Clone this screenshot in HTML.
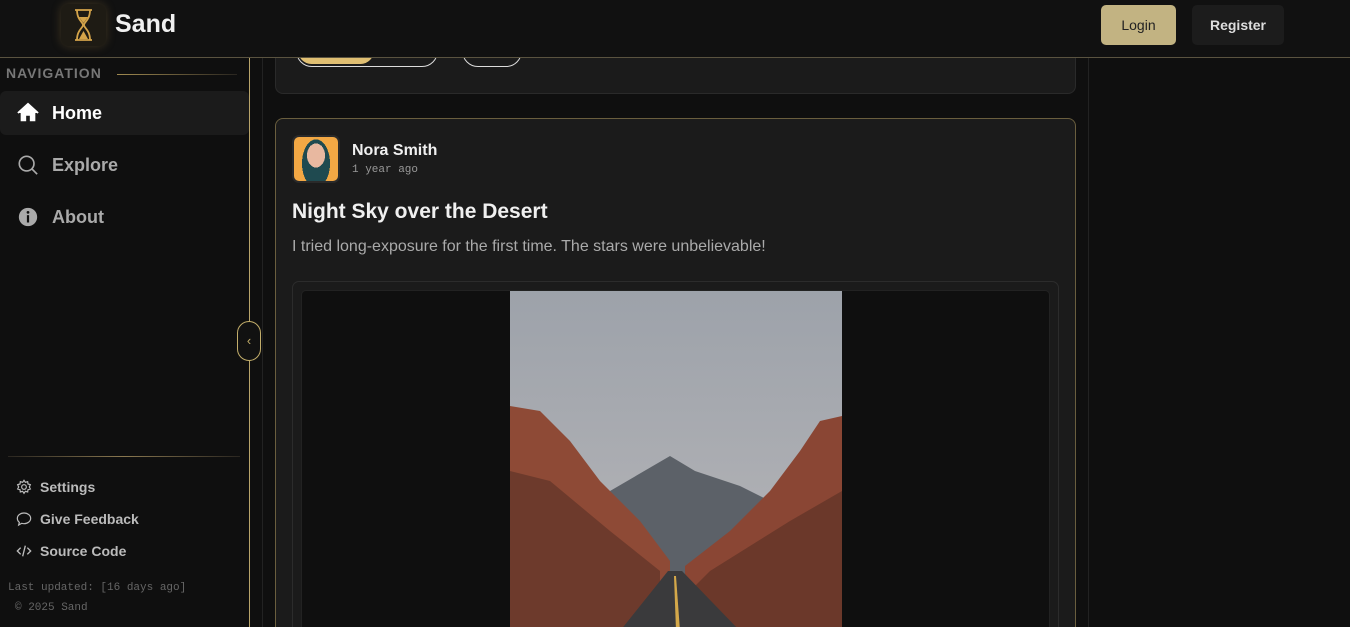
<!DOCTYPE html>
<html><head><style>
*{box-sizing:border-box;margin:0;padding:0}
html{width:1350px;height:627px;overflow:hidden}
body{width:1350px;height:627px;overflow:hidden;background:#0f0f0f;font-family:"Liberation Sans",sans-serif;color:#eee;position:relative}
.hdr{position:absolute;left:0;top:0;width:1350px;height:58px;background:#111;border-bottom:1px solid #5a5340;z-index:5}
.logo{position:absolute;left:61px;top:4px;width:45px;height:42px;border-radius:8px;background:#1e1b14;box-shadow:0 0 10px rgba(200,160,80,.25)}
.brand{position:absolute;left:115px;top:10px;font-size:25px;font-weight:bold;color:#f0f0f0}
.btn{position:absolute;top:5px;height:40px;border-radius:5px;font-size:14px;font-weight:bold;display:flex;align-items:center;justify-content:center}
.side{position:absolute;left:0;top:58px;width:250px;height:569px;border-right:1px solid #b8a46a}
.navt{position:absolute;left:6px;top:7px;font-size:14px;font-weight:bold;letter-spacing:1px;color:#777}
.navline{position:absolute;left:117px;top:16px;width:120px;height:1px;background:linear-gradient(90deg,#a08a50,#2a2620)}
.item{position:absolute;left:0;width:249px;height:44px;display:flex;align-items:center;padding-left:17px;font-size:18px;font-weight:bold;color:#aaa;border-radius:6px}
.item svg{margin-right:13px}
.sm{position:absolute;left:16px;display:flex;align-items:center;font-size:14px;font-weight:bold;color:#bbb}
.sm svg{margin-right:8px}
.mono{position:absolute;font-family:"Liberation Mono",monospace;font-size:11px;color:#666}
.card{position:absolute;left:275px;width:801px;background:#1b1b1b;border-radius:8px;overflow:hidden}
.pill{position:absolute;height:32px;border:1.5px solid #ddd;border-radius:16px}
</style></head><body>
<div class="hdr">
  <div class="logo"><svg width="45" height="42" viewBox="0 0 45 42"><g stroke="#d4a44a" stroke-width="1.8" fill="none"><line x1="14" y1="6" x2="31" y2="6"/><line x1="14" y1="36" x2="31" y2="36"/><path d="M16 6 C16 16 22 18 22 21 C22 24 16 26 16 36 M29 6 C29 16 23 18 23 21 C23 24 29 26 29 36"/></g><path d="M18 13 L27 13 L22.5 19Z M22.5 27 L27 35 L18 35Z" fill="#d4a44a"/></svg></div>
  <div class="brand">Sand</div>
  <div class="btn" style="left:1101px;width:75px;background:#c2b382;color:#222;font-weight:normal">Login</div>
  <div class="btn" style="left:1192px;width:92px;background:#1c1c1c;color:#ddd">Register</div>
</div>
<div style="position:absolute;left:262px;top:58px;width:1px;height:569px;background:#222"></div>
<div style="position:absolute;left:1088px;top:58px;width:1px;height:569px;background:#222"></div>
<div class="side">
  <div class="navt">NAVIGATION</div><div class="navline"></div>
  <div class="item" style="top:33px;background:#1b1b1b;color:#fff"><svg width="22" height="22" viewBox="0 0 24 24"><path d="M12 3 L2 12 L4 12 L4 21 L10 21 L10 15 L14 15 L14 21 L20 21 L20 12 L22 12Z" fill="#fff"/><path d="M1 12 L12 2 L23 12" stroke="#fff" stroke-width="2" fill="none"/></svg>Home</div>
  <div class="item" style="top:85px"><svg width="22" height="22" viewBox="0 0 24 24" fill="none" stroke="#aaa" stroke-width="1.8"><circle cx="10.5" cy="10.5" r="8"/><line x1="16.5" y1="16.5" x2="22" y2="22"/></svg>Explore</div>
  <div class="item" style="top:137px"><svg width="22" height="22" viewBox="0 0 24 24"><circle cx="12" cy="12" r="10" fill="#aaa"/><rect x="10.8" y="10" width="2.4" height="8" fill="#0f0f0f"/><circle cx="12" cy="7" r="1.5" fill="#0f0f0f"/></svg>About</div>
  <div style="position:absolute;left:8px;top:398px;width:232px;height:1px;background:linear-gradient(90deg,#2a2620,#8a7850,#2a2620)"></div>
  <div class="sm" style="top:421px"><svg width="16" height="16" viewBox="0 0 24 24" fill="none" stroke="#bbb" stroke-width="1.8"><circle cx="12" cy="12" r="3.5"/><path d="M12 2l2 3 3.5-1 .5 3.5 3.5 1-1.5 3.5 1.5 3-3.5 1-.5 3.5-3.5-1-2 3-2-3-3.5 1-.5-3.5-3.5-1 1.5-3-1.5-3.5 3.5-1 .5-3.5 3.5 1z"/></svg>Settings</div>
  <div class="sm" style="top:453px"><svg width="16" height="16" viewBox="0 0 24 24" fill="none" stroke="#bbb" stroke-width="1.8"><path d="M12 3c5.5 0 10 3.6 10 8s-4.5 8-10 8c-1.3 0-2.5-.2-3.6-.5L4 21l1-4C3.2 15.5 2 13.4 2 11c0-4.4 4.5-8 10-8z"/></svg>Give Feedback</div>
  <div class="sm" style="top:485px"><svg width="16" height="16" viewBox="0 0 24 24" fill="none" stroke="#bbb" stroke-width="2"><path d="M7 7l-5 5 5 5M17 7l5 5-5 5M14 4l-4 16"/></svg>Source Code</div>
  <div class="mono" style="left:8px;top:524px">Last updated: [16 days ago]</div>
  <div class="mono" style="left:15px;top:544px">© 2025 Sand</div>
</div>
<div style="position:absolute;left:237px;top:321px;width:24px;height:40px;border:1px solid #c2ad6a;border-radius:12px;background:#111;color:#c2ad6a;font-size:13px;text-align:center;line-height:38px;z-index:3">‹</div>
<div class="card" style="top:20px;height:74px;border:1px solid #2a2a2a">
  <div class="pill" style="left:20px;top:14px;width:142px"><div style="position:absolute;left:1px;top:1px;width:76px;height:27px;border-radius:14px;background:#e0bf72"></div></div>
  <div class="pill" style="left:186px;top:14px;width:60px"></div>
</div>
<div style="position:absolute;left:275px;top:0;width:801px;height:57px;z-index:4;pointer-events:none;background:radial-gradient(ellipse 60px 30px at 335px 50px,rgba(200,160,80,.18),transparent)"></div>
<div class="card" style="top:118px;height:509px;border:1px solid #6a5e3e;border-bottom:none;border-radius:8px 8px 0 0">
  <div style="position:absolute;left:16px;top:16px;width:48px;height:48px;border-radius:7px;background:#2a2a2a;padding:2px"><div style="width:44px;height:44px;border-radius:5px;background:radial-gradient(ellipse 9px 12px at 50% 42%,#e8b8a0 0 100%,transparent),radial-gradient(ellipse 14px 24px at 50% 60%,#1f4a50 0 100%,transparent),#f3a844"></div></div>
  <div style="position:absolute;left:76px;top:23px;font-size:16px;font-weight:bold;color:#f0f0f0">Nora Smith</div>
  <div style="position:absolute;left:76px;top:45px;font-family:'Liberation Mono',monospace;font-size:11px;color:#999">1 year ago</div>
  <div style="position:absolute;left:16px;top:81px;font-size:21px;font-weight:bold;color:#f0f0f0">Night Sky over the Desert</div>
  <div style="position:absolute;left:16px;top:119px;font-size:16px;color:#aaa">I tried long-exposure for the first time. The stars were unbelievable!</div>
  <div style="position:absolute;left:16px;top:162px;width:767px;height:347px;border:1px solid #2c2c2c;border-bottom:none;border-radius:7px 7px 0 0;overflow:hidden">
    <div style="position:absolute;left:8px;top:8px;width:749px;height:339px;background:#0f0f0f;border:1px solid #222;border-bottom:none;border-radius:5px 5px 0 0;overflow:hidden">
      <svg style="position:absolute;left:208px;top:0" width="332" height="340" viewBox="0 0 332 340">
        <defs><linearGradient id="s" x1="0" y1="0" x2="0" y2="1"><stop offset="0" stop-color="#9da2aa"/><stop offset="1" stop-color="#b8b7b9"/></linearGradient></defs>
        <rect width="332" height="340" fill="url(#s)"/>
        <path d="M100 200 L160 165 L185 180 L230 195 L260 210 L260 290 L100 290Z" fill="#5c6168"/>
        <path d="M0 115 L30 120 L60 150 L90 190 L130 230 L160 270 L160 340 L0 340Z" fill="#8e4a36"/>
        <path d="M332 125 L310 130 L290 160 L260 200 L220 240 L175 275 L175 340 L332 340Z" fill="#8a4634"/>
        <path d="M0 180 L40 190 L100 240 L150 280 L150 340 L0 340Z" fill="#6d3a2c"/>
        <path d="M332 200 L280 230 L200 280 L180 300 L180 340 L332 340Z" fill="#6b382a"/>
        <path d="M158 280 L172 280 L230 340 L110 340Z" fill="#3a3a3c"/>
        <path d="M164 285 L166 285 L170 340 L166 340Z" fill="#d4a84a"/>
      </svg>
    </div>
  </div>
</div>
</body></html>
